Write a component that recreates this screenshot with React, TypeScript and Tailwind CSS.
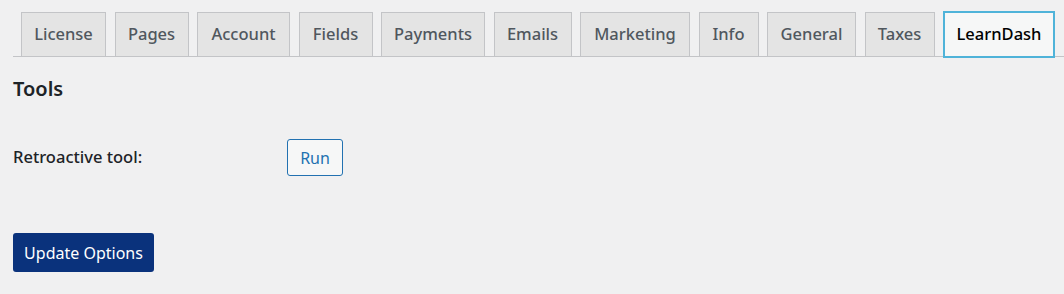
import React from "react";

const tabs = [
  { label: "License", w: "w-[85px]" },
  { label: "Pages", w: "w-[74px]" },
  { label: "Account", w: "w-[93px]" },
  { label: "Fields", w: "w-[74px]" },
  { label: "Payments", w: "w-[104px]" },
  { label: "Emails", w: "w-[78px]" },
  { label: "Marketing", w: "w-[110px]" },
  { label: "Info", w: "w-[60px]" },
  { label: "General", w: "w-[89px]" },
  { label: "Taxes", w: "w-[70px]" },
  { label: "LearnDash", w: "w-[112px]" },
];

const App = () => {
  const active = "LearnDash";

  return (
    <div className="min-h-[294px] w-[1064px] bg-[#f0f0f1] pl-[13px] pt-[11px] text-[#1d2327]" style={{ fontFamily: '"Noto Sans", "Open Sans", sans-serif' }}>
      <nav className="flex items-end gap-[8.5px] border-b border-[#c3c4c7] pl-[8px]">
        {tabs.map((tab) =>
          tab.label === active ? (
            <a
              key={tab.label}
              className={`-mb-[2px] flex h-[47px] items-center justify-center border-2 border-[#4fb3d9] bg-[#f6f7f7] text-[16.5px] font-medium text-black ${tab.w}`}
            >
              {tab.label}
            </a>
          ) : (
            <a
              key={tab.label}
              className={`-mb-px flex h-[45px] items-center justify-center border border-[#c3c4c7] bg-[#e4e4e4] text-[16.5px] font-medium text-[#50575e] ${tab.w}`}
            >
              {tab.label}
            </a>
          )
        )}
      </nav>

      <h2 className="mt-[19px] text-[20px] font-semibold leading-[26px]">Tools</h2>

      <div className="mt-[37px] flex items-center">
        <span className="w-[274px] text-[16.5px] font-medium">Retroactive tool:</span>
        <button className="h-[37px] w-[56px] rounded-[3px] border border-[#2271b1] bg-[#f6f7f7] text-[16px] text-[#2271b1]">
          Run
        </button>
      </div>

      <button className="mt-[57px] h-[39px] w-[141px] rounded-[3px] bg-[#0a327c] text-[16px] text-white">
        Update Options
      </button>
    </div>
  );
};

export default App;
